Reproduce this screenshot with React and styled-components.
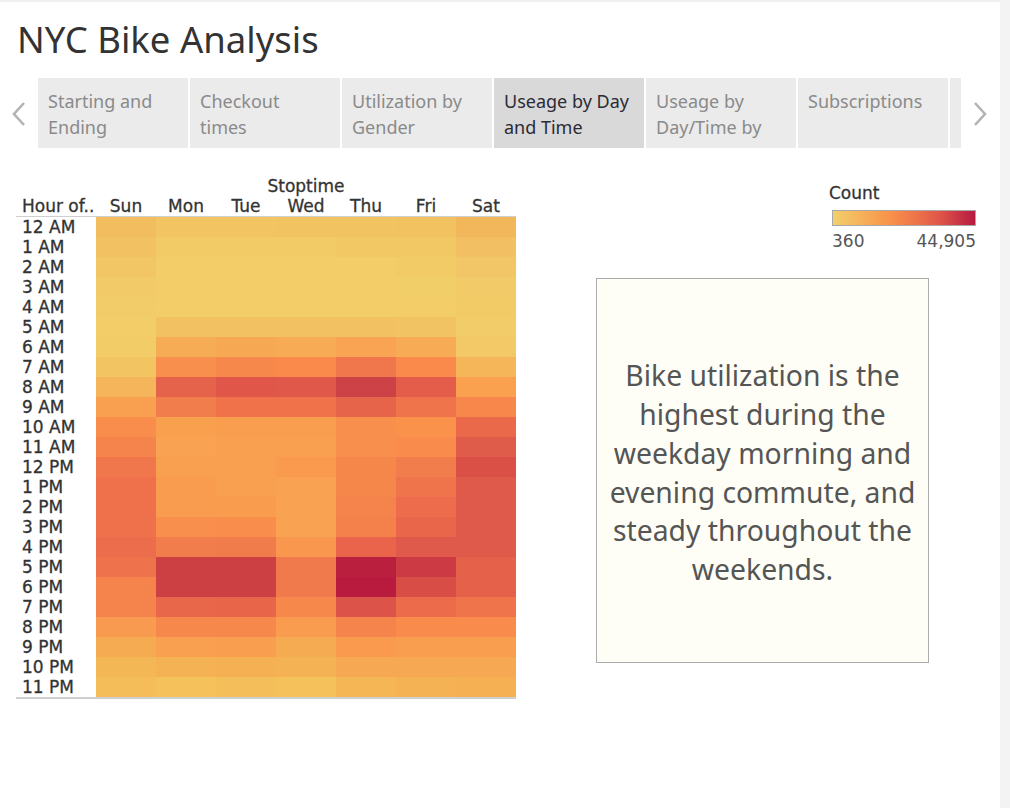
import React from "react";
import styled, { createGlobalStyle } from "styled-components";

const GlobalStyle = createGlobalStyle`
  body {
    margin: 0;
    background: #ffffff;
    font-family: "Noto Sans", "Open Sans", sans-serif;
  }
`;

const tabs = [
  "Starting and Ending",
  "Checkout times",
  "Utilization by Gender",
  "Useage by Day and Time",
  "Useage by Day/Time by",
  "Subscriptions",
];

const days = ["Sun", "Mon", "Tue", "Wed", "Thu", "Fri", "Sat"];

const hours = [
  "12 AM", "1 AM", "2 AM", "3 AM", "4 AM", "5 AM", "6 AM", "7 AM",
  "8 AM", "9 AM", "10 AM", "11 AM", "12 PM", "1 PM", "2 PM", "3 PM",
  "4 PM", "5 PM", "6 PM", "7 PM", "8 PM", "9 PM", "10 PM", "11 PM",
];

// colours read off the heatmap, one row per hour, Sun..Sat
const cells = [
  ["#f2bd5e", "#f2c562", "#f2c562", "#f2c461", "#f2c461", "#f2c160", "#f3b75b"],
  ["#f2c262", "#f2ca66", "#f2ca66", "#f2ca66", "#f2c865", "#f2c865", "#f2c062"],
  ["#f2c665", "#f2cd68", "#f2cd68", "#f2cd68", "#f2cd68", "#f2cb67", "#f2c666"],
  ["#f2ca67", "#f2cd68", "#f2cd68", "#f2cd68", "#f2cd68", "#f2ce69", "#f2ca67"],
  ["#f2cc68", "#f2cd68", "#f2cd68", "#f2cd68", "#f2cd68", "#f2cd68", "#f2cb67"],
  ["#f2cd68", "#f2c262", "#f2c262", "#f2c262", "#f2c262", "#f2c363", "#f2cc68"],
  ["#f2cc67", "#f6ab55", "#f7a853", "#f7ab54", "#f8a452", "#f7ab54", "#f2c966"],
  ["#f2c462", "#f98f4c", "#f6884b", "#f98a4c", "#ef774b", "#f98a4c", "#f5b65a"],
  ["#f5b55a", "#e4634a", "#e0574a", "#e0584a", "#cd4247", "#e35d4a", "#f9a14f"],
  ["#f8a050", "#f07d4b", "#ef724b", "#ef724b", "#e6644a", "#ef744b", "#f8874c"],
  ["#f98e4c", "#f9a04f", "#f99d4e", "#f99d4e", "#f98f4c", "#fa924c", "#ea694a"],
  ["#f5834c", "#f9a352", "#f9a050", "#f9a050", "#f98f4c", "#f98b4d", "#e05c4a"],
  ["#f0774b", "#f9a050", "#f9a050", "#f99a4e", "#f6874b", "#f07d4b", "#da5047"],
  ["#ee714b", "#f99c4f", "#f9a050", "#f9a352", "#f6874b", "#ef744b", "#df5a4a"],
  ["#ee714b", "#f99c4f", "#f99c4e", "#f9a352", "#f4844c", "#ec6c4b", "#df5a4a"],
  ["#ee714b", "#f98f4c", "#f98e4c", "#f9a352", "#f4804c", "#ea664a", "#df5a4a"],
  ["#ec6d4b", "#f07d4b", "#f07b4b", "#f9974e", "#e9644a", "#df5a4a", "#df5a4a"],
  ["#ee724b", "#cc4044", "#cc4044", "#f07a4b", "#bb1f3e", "#cc3b44", "#e6614a"],
  ["#f5834c", "#cc4044", "#cc4044", "#f07a4b", "#b81b3e", "#d94d47", "#e6614a"],
  ["#f5834c", "#e8664a", "#e8654a", "#f6884b", "#dc5449", "#eb6b4a", "#ef734b"],
  ["#f89a4f", "#f6884b", "#f6884b", "#f99c4f", "#f4844c", "#f98b4d", "#f98b4d"],
  ["#f5ab52", "#f9a050", "#f99e4f", "#f5ab52", "#f99a4e", "#f99e4f", "#f99e4f"],
  ["#f4b756", "#f5b255", "#f5b054", "#f5b255", "#f6a852", "#f6a852", "#f6a852"],
  ["#f4bd59", "#f4c15a", "#f4bf5a", "#f4c15a", "#f5b656", "#f5b255", "#f5b054"],
];

const Chevron = ({ dir }) => (
  <svg width="16" height="26" viewBox="0 0 16 26">
    <path
      d={dir === "left" ? "M13 2 L3 13 L13 24" : "M3 2 L13 13 L3 24"}
      fill="none"
      stroke="#b3b3b3"
      strokeWidth="2.6"
    />
  </svg>
);

const App = () => {
  return (
    <>
      <GlobalStyle />
      <Page>
        <Main>
          <Title>NYC Bike Analysis</Title>
          <TabBar>
            <Arrow>
              <Chevron dir="left" />
            </Arrow>
            <TabViewport>
              {tabs.map((t) => (
                <Tab key={t} selected={t === "Useage by Day and Time"}>
                  {t}
                </Tab>
              ))}
              {/* next tab peeks in at the edge */}
              <Tab />
            </TabViewport>
            <Arrow>
              <Chevron dir="right" />
            </Arrow>
          </TabBar>

          <Content>
            <Chart>
              <AxisTitle>Stoptime</AxisTitle>
              <HeaderRow>
                <RowHead>Hour of..</RowHead>
                {days.map((d) => (
                  <DayHead key={d}>{d}</DayHead>
                ))}
              </HeaderRow>
              <Grid>
                {hours.map((h, i) => (
                  <React.Fragment key={h}>
                    <HourLabel>{h}</HourLabel>
                    {cells[i].map((c, j) => (
                      <Cell key={j} style={{ background: c }} />
                    ))}
                  </React.Fragment>
                ))}
              </Grid>
            </Chart>

            <Side>
              <Legend>
                <LegendTitle>Count</LegendTitle>
                <LegendBar />
                <LegendScale>
                  <span>360</span>
                  <span>44,905</span>
                </LegendScale>
              </Legend>
              <Note>
                Bike utilization is the highest during the weekday morning and
                evening commute, and steady throughout the weekends.
              </Note>
            </Side>
          </Content>
        </Main>
        <Gutter />
      </Page>
    </>
  );
};

const chartFont = `"DejaVu Sans", "Liberation Sans", sans-serif`;

const Page = styled.div`
  display: flex;
  width: 1010px;
  height: 808px;
  overflow: hidden;
`;

const Main = styled.div`
  width: 1000px;
  border-top: 2px solid #f0f0f0;
  background: #ffffff;
`;

const Gutter = styled.div`
  width: 10px;
  background: #f3f3f3;
`;

const Title = styled.h1`
  margin: 0;
  padding: 13px 0 0 17px;
  height: 61px;
  box-sizing: border-box;
  font-weight: 400;
  font-size: 36.5px;
  line-height: 48px;
  color: #333333;
`;

const TabBar = styled.div`
  display: flex;
  align-items: stretch;
  height: 70px;
  margin-top: 15px;
`;

const Arrow = styled.div`
  width: 38px;
  display: flex;
  align-items: center;
  justify-content: center;
  padding-top: 2px;
`;

const TabViewport = styled.div`
  width: 923px;
  display: flex;
  gap: 2px;
  overflow: hidden;
`;

const Tab = styled.div`
  flex: 0 0 150px;
  box-sizing: border-box;
  padding: 10px 13px 0 10px;
  background: ${(p) => (p.selected ? "#d9d9d9" : "#ebebeb")};
  color: ${(p) => (p.selected ? "#2b2b36" : "#8a8a8a")};
  font-size: 18px;
  line-height: 26px;
`;

const Content = styled.div`
  display: flex;
  margin-top: 28px;
`;

const Chart = styled.div`
  width: 500px;
  margin-left: 16px;
  color: #333333;
  font-family: ${chartFont};
  font-size: 17px;
  -webkit-text-stroke: 0.3px #333333;
`;

const AxisTitle = styled.div`
  padding-left: 80px;
  text-align: center;
  line-height: 20px;
`;

const HeaderRow = styled.div`
  display: grid;
  grid-template-columns: 80px repeat(7, 60px);
  border-bottom: 1px solid #cfcfcf;
  line-height: 20px;
`;

const RowHead = styled.div`
  padding-left: 6px;
  white-space: nowrap;
`;

const DayHead = styled.div`
  text-align: center;
`;

const Grid = styled.div`
  display: grid;
  grid-template-columns: 80px repeat(7, 60px);
  grid-auto-rows: 20px;
  border-bottom: 2px solid #cfcfcf;
`;

const HourLabel = styled.div`
  padding-left: 6px;
  line-height: 20px;
`;

const Cell = styled.div``;

const Side = styled.div`
  margin-left: 80px;
  display: flex;
  flex-direction: column;
`;

const Legend = styled.div`
  margin: 7px 0 0 233px;
  width: 146px;
  font-family: ${chartFont};
  font-size: 17px;
`;

const LegendTitle = styled.div`
  line-height: 20px;
  color: #333333;
  -webkit-text-stroke: 0.3px #333333;
`;

const LegendBar = styled.div`
  margin: 7px 0 0 3px;
  width: 144px;
  height: 16px;
  border: 1px solid #a8a8a8;
  box-sizing: border-box;
  background: linear-gradient(
    to right,
    #f2d06b 0%,
    #f6ae58 22%,
    #f8924a 40%,
    #ee744a 58%,
    #df5649 75%,
    #b61a40 100%
  );
`;

const LegendScale = styled.div`
  margin: 4px 0 0 3px;
  width: 144px;
  display: flex;
  justify-content: space-between;
  line-height: 22px;
  color: #555555;
`;

const Note = styled.div`
  margin-top: 26px;
  width: 333px;
  height: 385px;
  box-sizing: border-box;
  border: 1px solid #ababab;
  background: #fefef6;
  display: flex;
  align-items: center;
  justify-content: center;
  padding: 4px 8px 0 8px;
  text-align: center;
  font-size: 28.3px;
  line-height: 38.7px;
  color: #555555;
`;

export default App;
